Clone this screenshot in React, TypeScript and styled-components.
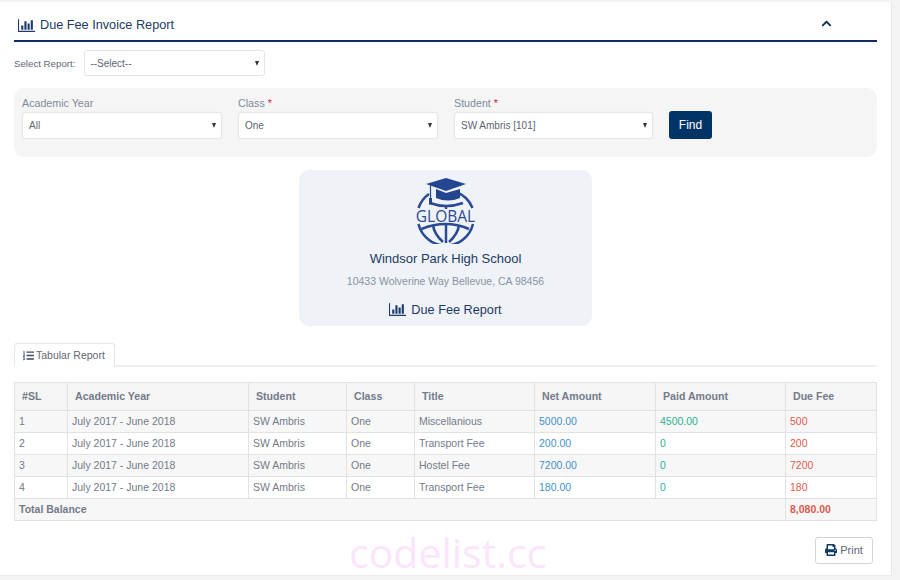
import React from "react";
import styled, { createGlobalStyle } from "styled-components";
import { FaChevronUp, FaListOl, FaPrint } from "react-icons/fa";

const Global = createGlobalStyle`
  html, body { margin: 0; padding: 0; background: #f4f4f4; }
  body { font-family: "Liberation Sans", Arial, sans-serif; color: #6a7487; }
  * { box-sizing: border-box; }
`;

const Page = styled.div`
  width: 900px;
  height: 580px;
  padding-top: 2px;
  overflow: hidden;
`;

const Panel = styled.main`
  position: relative;
  width: 892px;
  height: 574px;
  padding: 0 14px;
  background: #fff;
  border-right: 1px solid #e8e8e8;
  border-bottom: 1px solid #ececec;
`;

const Header = styled.header`
  display: flex;
  align-items: center;
  height: 39.5px;
  padding: 9px 3px 0 4px;
  border-bottom: 2px solid #12296a;
  color: #1c3a66;
`;

const Title = styled.h1`
  display: flex;
  align-items: center;
  gap: 5px;
  flex: 1;
  margin: 0;
  font-size: 12.7px;
  font-weight: 400;
`;

const ChartGlyph = styled.svg`
  flex: none;
  width: 17px;
  height: 15px;
  fill: #1d3a6c;
`;

const ChartIcon = () => (
  <ChartGlyph viewBox="0 0 2048 1792" aria-hidden="true">
    <path d="M640 896v512h-256v-512h256zm384-512v1024h-256v-1024h256zm1024 1152v128h-2048v-1536h128v1408h1920zm-640-896v768h-256v-768h256zm384-384v1152h-256v-1152h256z" />
  </ChartGlyph>
);

const Collapse = styled(FaChevronUp)`
  width: 11px;
  height: 11px;
  margin: 0 42px 4px 0;
  color: #0c2a50;
`;

const ReportRow = styled.div`
  display: flex;
  align-items: center;
  gap: 9px;
  margin-top: 8px;
  font-size: 9.7px;
  color: #5f6774;
`;

const ReportLabel = styled.span`
  padding-top: 2px;
`;

const Select = styled.div<{ $width: number; $height?: number }>`
  position: relative;
  display: flex;
  align-items: center;
  flex: none;
  width: ${(p) => p.$width}px;
  height: ${(p) => p.$height ?? 27}px;
  padding: 1px 0 0 ${(p) => (p.$height ? 5 : 6)}px;
  background: #fff;
  border: 1px solid #e6e6e6;
  border-radius: 3px;
  font-size: 10px;
  color: #5c6470;
  box-shadow: 0 0 2px rgba(0, 0, 0, 0.06);

  &::after {
    content: "";
    position: absolute;
    right: 5px;
    top: 10px;
    border-left: 2.5px solid transparent;
    border-right: 2.5px solid transparent;
    border-top: 5px solid #333;
  }
`;

const FilterPanel = styled.section`
  display: flex;
  align-items: flex-end;
  gap: 16px;
  height: 69px;
  margin-top: 12px;
  padding: 0 8px 18px;
  background: #f5f5f6;
  border-radius: 10px;
`;

const Field = styled.label`
  display: flex;
  flex-direction: column;
  gap: 1.5px;
  font-size: 10.7px;
  line-height: 14px;
  color: #828a99;
`;

const Required = styled.span`
  color: #d7263d;
`;

const FindButton = styled.button`
  width: 43px;
  height: 28px;
  padding: 0;
  background: #003466;
  border: none;
  border-radius: 3px;
  color: #fff;
  font: 12px "Liberation Sans", Arial, sans-serif;
`;

const SchoolCard = styled.section`
  display: flex;
  flex-direction: column;
  align-items: center;
  width: 293px;
  height: 156px;
  margin: 13px auto 0;
  padding-top: 8px;
  background: #eff2f6;
  border-radius: 10px;
  color: #1c3a66;
`;

const Logo = styled.svg`
  display: block;
  width: 60px;
  height: 66px;
`;

const SchoolName = styled.div`
  margin-top: 7px;
  font-size: 13px;
  line-height: 16px;
`;

const Address = styled.div`
  margin-top: 7px;
  font-size: 10.5px;
  line-height: 14px;
  color: #8a92a3;
`;

const CardTitle = styled.div`
  display: flex;
  align-items: center;
  gap: 5px;
  margin-top: 14px;
  font-size: 12.7px;
  line-height: 16px;
`;

const TabBar = styled.nav`
  display: flex;
  height: 24px;
  margin-top: 17px;
  border-bottom: 2px solid #eeeeee;
`;

const Tab = styled.div`
  display: flex;
  align-items: center;
  gap: 2px;
  width: 101px;
  height: 24px;
  padding-left: 8px;
  background: #fff;
  border: 1px solid #e6e6e6;
  border-bottom: none;
  border-radius: 3px 3px 0 0;
  font-size: 10.5px;
  color: #5f6878;
`;

const TabIcon = styled(FaListOl)`
  width: 11px;
  height: 11px;
  color: #3b4a66;
`;

const Table = styled.table`
  width: 862px;
  margin-top: 15px;
  border-collapse: collapse;
  table-layout: fixed;
  font-size: 10.5px;
`;

const Cell = styled.td<{ $tone?: "blue" | "green" | "red" }>`
  height: 22px;
  padding: 0 4px;
  border: 1px solid #e2e2e2;
  color: ${(p) =>
    p.$tone === "blue" ? "#4492cc" : p.$tone === "green" ? "#2db38f" : p.$tone === "red" ? "#df5a4e" : "#737b8a"};
`;

const HeadCell = styled.th`
  height: 28px;
  padding: 0 4px 0 7px;
  background: #f5f5f5;
  border: 1px solid #e2e2e2;
  font-size: 10.6px;
  font-weight: 700;
  text-align: left;
  color: #737b8a;
`;

const Row = styled.tr<{ $striped: boolean }>`
  background: ${(p) => (p.$striped ? "#f7f7f7" : "#fff")};
`;

const TotalRow = styled.tr`
  background: #f7f7f7;
  font-weight: 700;
`;

const Footer = styled.div`
  display: flex;
  justify-content: flex-end;
  margin-top: 16px;
  padding-right: 4px;
`;

const PrintButton = styled.button`
  display: flex;
  align-items: center;
  justify-content: center;
  gap: 3px;
  width: 58px;
  height: 27px;
  padding: 0;
  background: #fff;
  border: 1px solid #d4d4d4;
  border-radius: 3px;
  color: #5d6675;
  font: 11px "Liberation Sans", Arial, sans-serif;
`;

const PrintIcon = styled(FaPrint)`
  width: 12px;
  height: 12px;
  color: #0f3a66;
`;

const Watermark = styled.div`
  position: absolute;
  left: 349px;
  top: 529px;
  font: 41px/42px "Open Sans", sans-serif;
  color: #fbe5fb;
  pointer-events: none;
`;

const widths = [53, 181, 98, 68, 120, 121, 130, 91];
const heads = ["#SL", "Academic Year", "Student", "Class", "Title", "Net Amount", "Paid Amount", "Due Fee"];
const rows = [
  ["1", "Miscellanious", "5000.00", "4500.00", "500"],
  ["2", "Transport Fee", "200.00", "0", "200"],
  ["3", "Hostel Fee", "7200.00", "0", "7200"],
  ["4", "Transport Fee", "180.00", "0", "180"],
];

export default function App() {
  return (
    <Page>
      <Global />
      <Panel>
        <Header>
          <Title>
            <ChartIcon />
            Due Fee Invoice Report
          </Title>
          <Collapse />
        </Header>

        <ReportRow>
          <ReportLabel>Select Report:</ReportLabel>
          <Select $width={181} $height={26}>--Select--</Select>
        </ReportRow>

        <FilterPanel>
          <Field>
            Academic Year
            <Select $width={200}>All</Select>
          </Field>
          <Field>
            <span>
              Class <Required>*</Required>
            </span>
            <Select $width={200}>One</Select>
          </Field>
          <Field>
            <span>
              Student <Required>*</Required>
            </span>
            <Select $width={199}>SW Ambris [101]</Select>
          </Field>
          <FindButton>Find</FindButton>
        </FilterPanel>

        <SchoolCard>
          <Logo viewBox="0 0 60 66" aria-hidden="true">
            <g fill="none" stroke="#2a4a94" strokeWidth="2.5">
              <path d="M2.5 30 A28 28 0 0 1 13 16" />
              <path d="M40 14 A28 28 0 0 1 56.5 30" />
              <path d="M2.5 46 A28 28 0 0 0 57 46" />
              <path d="M5.5 51 Q30 41 53 51" />
              <path d="M30 46 V65" />
              <path d="M17 47 Q18 56 27 64" />
              <path d="M43 47 Q42 56 33 64" />
              <path d="M14 25 Q30 31 47 25" />
              <path d="M30 27 V31" />
            </g>
            <path d="M10 6 L30 0 L50 6 L30 13 Z" fill="#24458f" />
            <path d="M20 11 L30 15 L44 11 V20 Q32 25 20 20 Z" fill="#24458f" />
            <path d="M14.5 7 V21" stroke="#24458f" strokeWidth="1.2" />
            <rect x="13" y="20" width="3" height="6.5" fill="#24458f" />
            <text x="29.5" y="43.5" textAnchor="middle" fontFamily="'Open Sans', sans-serif" fontSize="15.5" fill="#2a4a94">
              GLOBAL
            </text>
          </Logo>
          <SchoolName>Windsor Park High School</SchoolName>
          <Address>10433 Wolverine Way Bellevue, CA 98456</Address>
          <CardTitle>
            <ChartIcon />
            Due Fee Report
          </CardTitle>
        </SchoolCard>

        <TabBar>
          <Tab>
            <TabIcon />
            Tabular Report
          </Tab>
        </TabBar>

        <Table>
          <colgroup>
            {widths.map((w, i) => (
              <col key={i} width={w} />
            ))}
          </colgroup>
          <thead>
            <tr>
              {heads.map((h) => (
                <HeadCell key={h}>{h}</HeadCell>
              ))}
            </tr>
          </thead>
          <tbody>
            {rows.map((r, i) => (
              <Row key={r[0]} $striped={i % 2 === 0}>
                <Cell>{r[0]}</Cell>
                <Cell>July 2017 - June 2018</Cell>
                <Cell>SW Ambris</Cell>
                <Cell>One</Cell>
                <Cell>{r[1]}</Cell>
                <Cell $tone="blue">{r[2]}</Cell>
                <Cell $tone="green">{r[3]}</Cell>
                <Cell $tone="red">{r[4]}</Cell>
              </Row>
            ))}
            <TotalRow>
              <Cell colSpan={7}>Total Balance</Cell>
              <Cell $tone="red">8,080.00</Cell>
            </TotalRow>
          </tbody>
        </Table>

        <Footer>
          <PrintButton>
            <PrintIcon />
            Print
          </PrintButton>
        </Footer>

        <Watermark>codelist.cc</Watermark>
      </Panel>
    </Page>
  );
}
